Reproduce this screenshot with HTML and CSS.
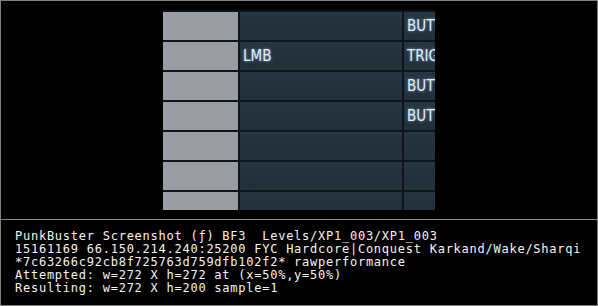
FILE: index.html
```html
<!DOCTYPE html>
<html lang="en">

<head>
    <meta charset="UTF-8">
    <title>PunkBuster Screenshot</title>
    <link rel="stylesheet" href="styles.css">
</head>

<body>

    <div class="frame">
        <!-- captured area -->
        <div class="capture">
            <div class="binds">
                <div class="cell key"></div>
                <div class="cell"></div>
                <div class="cell">BUTTON 1</div>

                <div class="cell key"></div>
                <div class="cell">LMB</div>
                <div class="cell">TRIGGER</div>

                <div class="cell key"></div>
                <div class="cell"></div>
                <div class="cell">BUTTON 2</div>

                <div class="cell key"></div>
                <div class="cell"></div>
                <div class="cell">BUTTON 3</div>

                <div class="cell key"></div>
                <div class="cell"></div>
                <div class="cell"></div>

                <div class="cell key"></div>
                <div class="cell"></div>
                <div class="cell"></div>

                <div class="cell key"></div>
                <div class="cell"></div>
                <div class="cell"></div>
            </div>
        </div>

        <!-- PunkBuster info -->
        <div class="info">
            <div class="line">PunkBuster Screenshot (ƒ) BF3  Levels/XP1_003/XP1_003</div>
            <div class="line">15161169 66.150.214.240:25200 FYC Hardcore|Conquest Karkand/Wake/Sharqi</div>
            <div class="line">*7c63266c92cb8f725763d759dfb102f2* rawperformance</div>
            <div class="line">Attempted: w=272 X h=272 at (x=50%,y=50%)</div>
            <div class="line">Resulting: w=272 X h=200 sample=1</div>
        </div>
    </div>

</body>

</html>
```

FILE: styles.css
```css
html,
body {
    margin: 0;
    background: #000;
}

.frame {
    width: 598px;
    height: 306px;
    box-sizing: border-box;
    border: 1px solid #808080;
    background: #000;
    display: flex;
    flex-direction: column;
}

/* Screenshot area */
.capture {
    flex-shrink: 0;
    width: 272px;
    height: 200px;
    margin: 9px 0 0 162px;
    overflow: hidden;
    background: #0d161e;
}

.binds {
    display: grid;
    grid-template-columns: 75px 162px 90px;
    grid-auto-rows: 28px;
    gap: 2px;
    padding-top: 2px;
}

.cell {
    background: linear-gradient(180deg, #273540 0%, #24313c 60%, #22303a 100%);
    display: flex;
    align-items: center;
    padding-left: 3px;
    white-space: nowrap;
    font-family: "DejaVu Sans Condensed", "DejaVu Sans", sans-serif;
    font-stretch: condensed;
    font-size: 15px;
    color: #e4eef6;
    text-shadow: 0 0 3px rgba(140, 190, 235, 0.9);
}

.cell.key {
    background: #9a9ea2;
}

/* Info text */
.info {
    margin-top: 9px;
    border-top: 1px solid #8a8a8a;
    padding: 10px 0 0 14px;
    font-family: "DejaVu Sans Mono", monospace;
    font-size: 12px;
    line-height: 13px;
    letter-spacing: 0.75px;
    color: #f4f4f4;
}

.line {
    white-space: pre;
}
```
